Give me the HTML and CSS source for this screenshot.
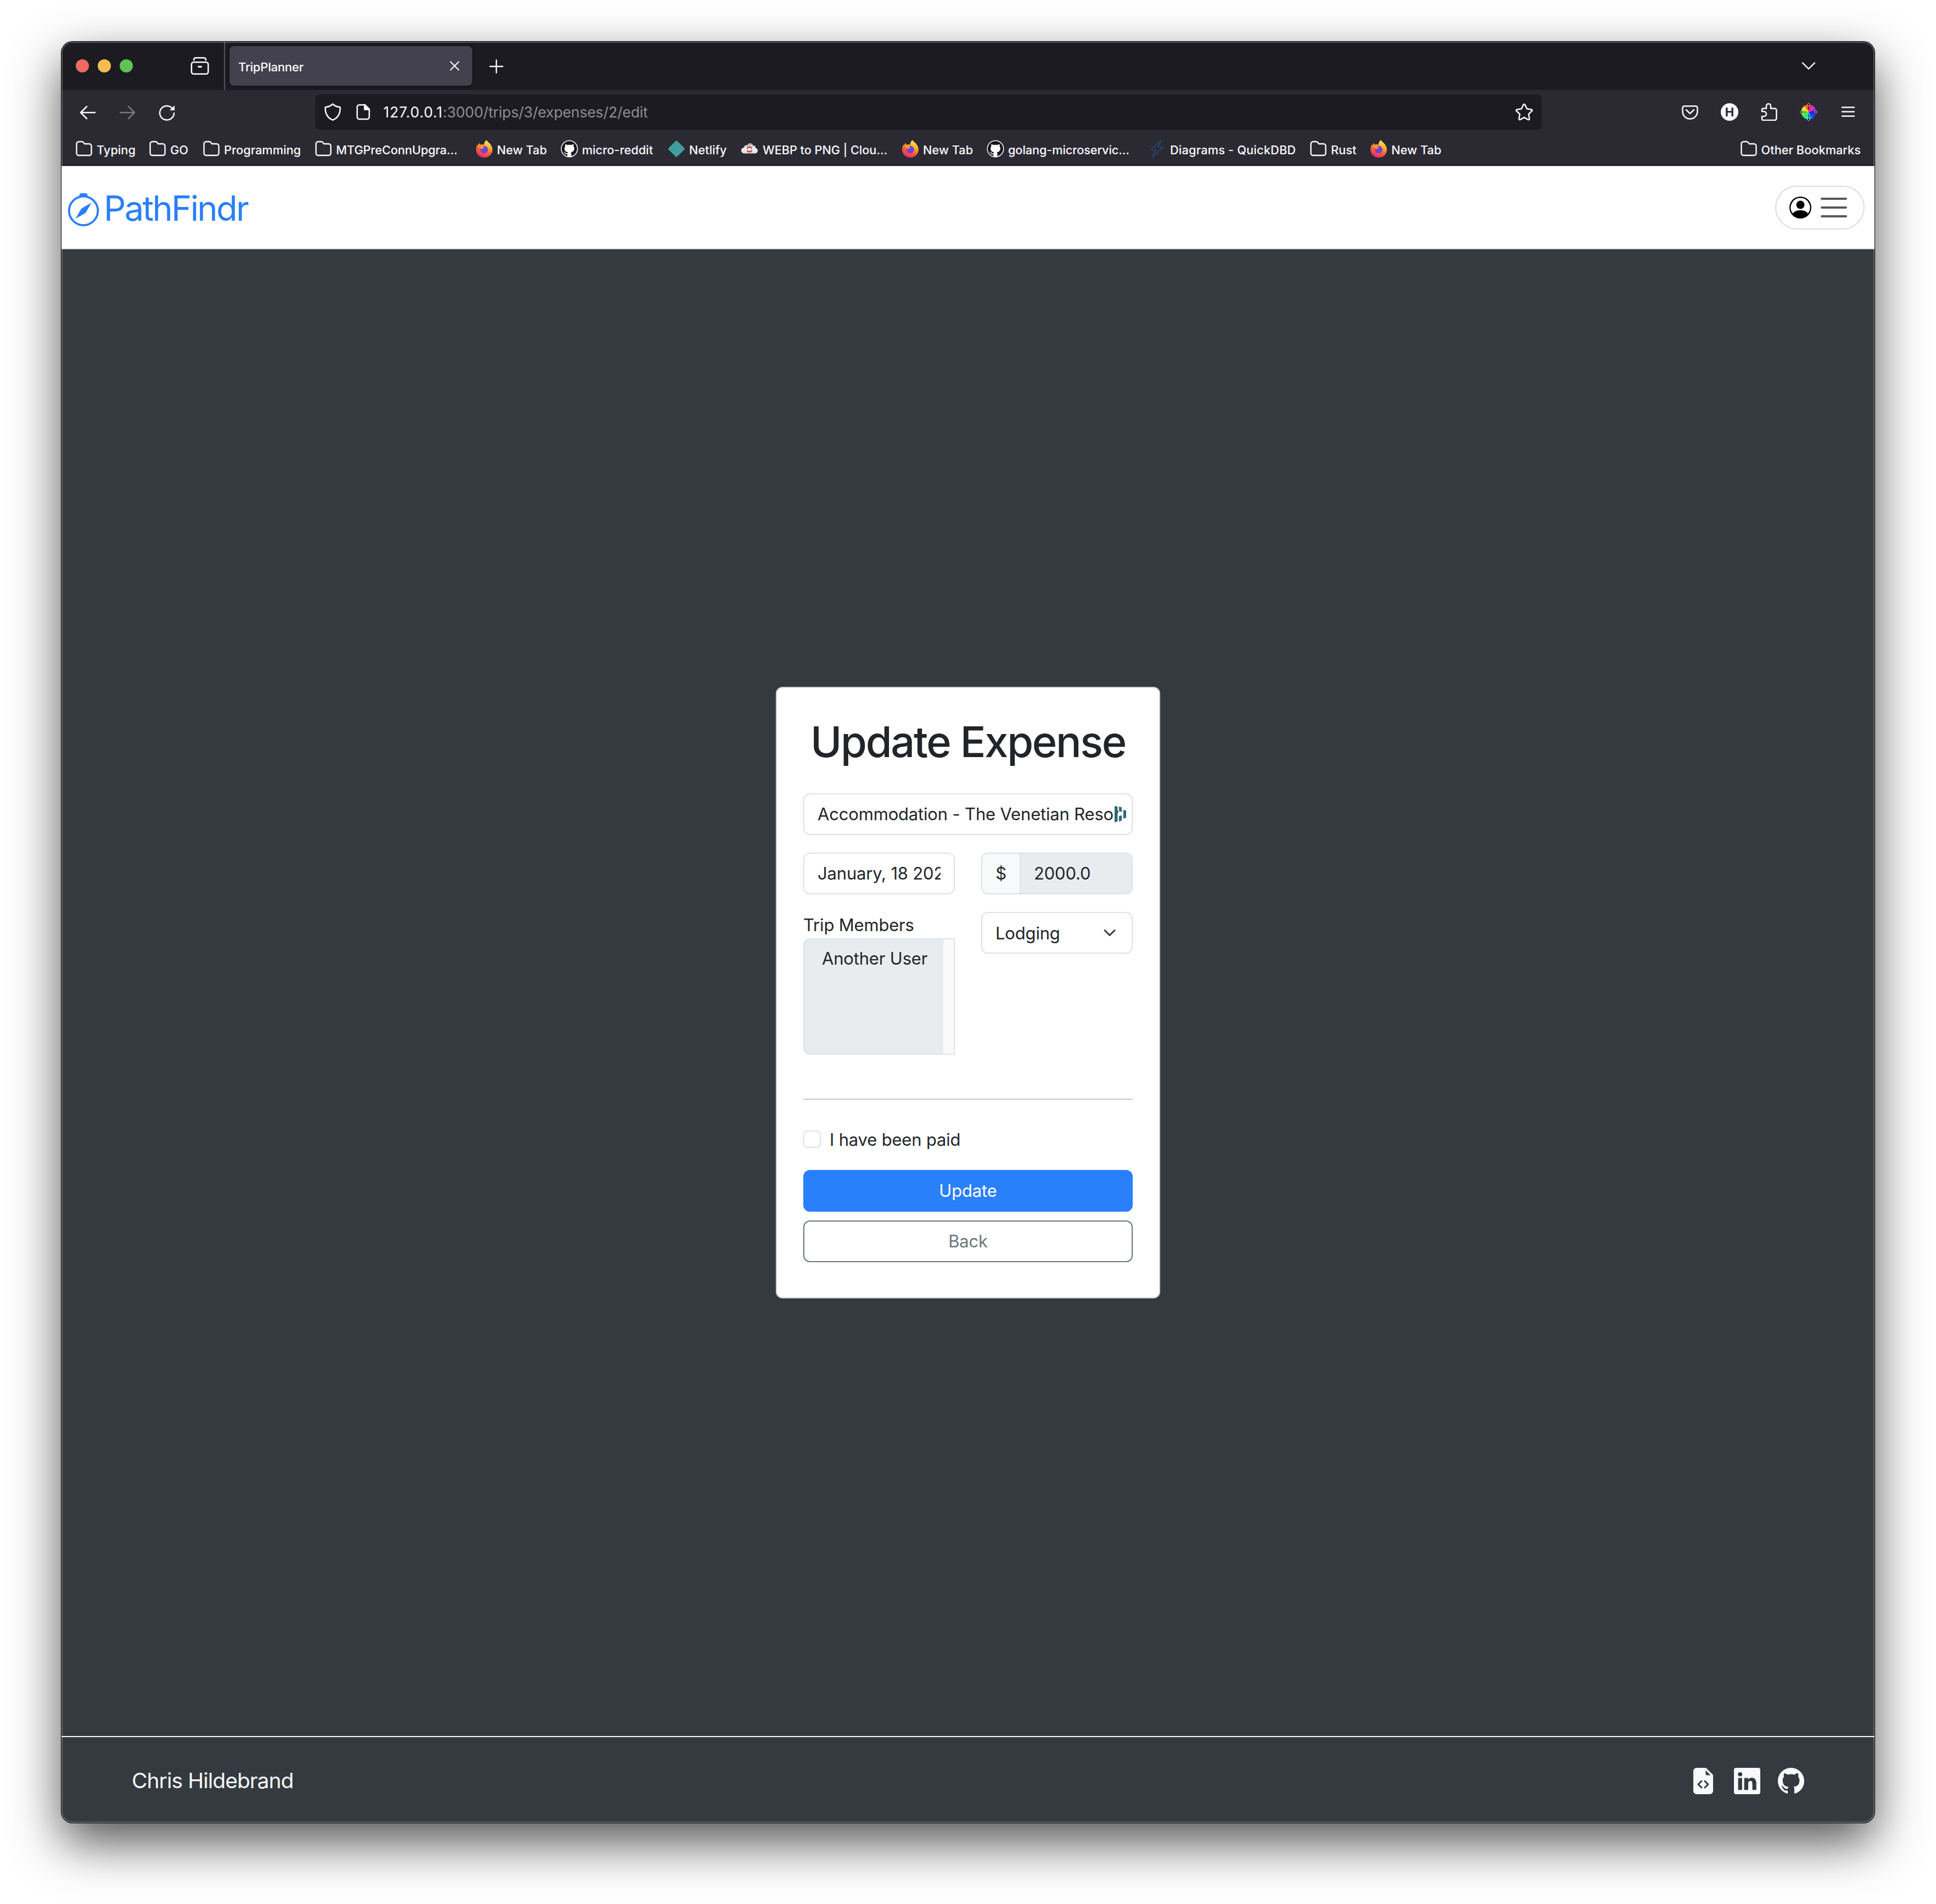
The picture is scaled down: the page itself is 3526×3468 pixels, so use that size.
FILE: index.html
```html
<!DOCTYPE html>
<html lang="en">
<head>
<meta charset="utf-8">
<title>TripPlanner</title>
<link rel="stylesheet" href="styles.css">
</head>
<body>
<svg class="defs" width="0" height="0" aria-hidden="true">
  <defs>
    <linearGradient id="flame" x1="0.75" y1="0" x2="0.3" y2="1">
      <stop offset="0" stop-color="#fff04f"/><stop offset="0.35" stop-color="#ffb02e"/><stop offset="0.65" stop-color="#ff5a36"/><stop offset="1" stop-color="#e3267a"/>
    </linearGradient>
    <linearGradient id="cloudfill" x1="0" y1="0" x2="0" y2="1"><stop offset="0" stop-color="#a5a3a3"/><stop offset="0.5" stop-color="#f2f0f0"/><stop offset="1" stop-color="#dedcdc"/></linearGradient>
    <symbol id="folder" viewBox="0 0 32 32"><path d="M2.5 7a4 4 0 0 1 4-4H12c1.400 0 2.200.6 3 1.600L17 7h8.500a4 4 0 0 1 4 4v13a4 4 0 0 1-4 4h-19a4 4 0 0 1-4-4z" fill="none" stroke="currentColor" stroke-width="2.400"/></symbol>
    <symbol id="firefox" viewBox="0 0 32 32">
      <path d="M20 0c2 4 6 5 8 9 1.500 2 2.800 5 2.800 8.500C30.800 26 24 32 16 32S1 26 1 17.500C1 13 2.500 9.500 3.500 8l.6 2.800C5 8.500 6 6.600 7.500 5.500c.2 1.800.6 2.500 1.800 3.200 2-.9 4-1 6 .1C16 5 17 2 20 0z" fill="url(#flame)"/>
      <circle cx="16" cy="17.500" r="6.800" fill="#6b45d8"/>
      <path d="M8 12c3-1 6.500 0 8.500 2-1.500 1.200-4 .8-4.500 3.200C11 16 9 15 8 12z" fill="#ff9a2e"/>
    </symbol>
    <symbol id="octocat" viewBox="0 0 16 16"><path d="M8 0C3.580 0 0 3.580 0 8c0 3.540 2.290 6.530 5.470 7.590.4.070.55-.17.55-.38 0-.19-.01-.82-.01-1.490-2.010.37-2.530-.49-2.690-.94-.09-.23-.48-.94-.82-1.130-.28-.15-.68-.52-.01-.53.63-.01 1.080.58 1.230.82.72 1.210 1.870.87 2.330.66.070-.52.28-.87.51-1.070-1.780-.2-3.640-.89-3.640-3.950 0-.87.31-1.590.82-2.150-.08-.2-.36-1.020.08-2.120 0 0 .67-.21 2.200.82.64-.18 1.320-.27 2-.27s1.360.09 2 .27c1.530-1.040 2.200-.82 2.200-.82.44 1.100.16 1.920.08 2.120.51.56.82 1.270.82 2.150 0 3.070-1.870 3.750-3.650 3.950.29.25.54.73.54 1.480 0 1.070-.01 1.930-.01 2.200 0 .21.15.46.55.38A8.010 8.010 0 0 0 16 8c0-4.420-3.580-8-8-8" fill="currentColor"/></symbol>
    <symbol id="github-fav" viewBox="0 0 32 32"><circle cx="16" cy="16" r="15.500" fill="#fff"/><use href="#octocat" x="2" y="2" width="28" height="28" color="#17151c"/></symbol>
  </defs>
</svg>

<div class="window">
  <div class="tabbar">
    <div class="lights"><i class="light red"></i><i class="light yellow"></i><i class="light green"></i></div>
    <svg class="icon archive" viewBox="0 0 40 40" fill="none" stroke="currentColor" stroke-width="2.600" stroke-linecap="round"><path d="M9 9.500c0-3 1.500-4.200 4-4.200h14c2.500 0 4 1.200 4 4.200"/><rect x="4.800" y="13.300" width="30.400" height="21.500" rx="4"/><path d="M17.500 21.500h5" stroke-width="3"/></svg>
    <div class="tab"><span class="tab-title">TripPlanner</span>
      <svg class="close" viewBox="0 0 18 18" stroke="currentColor" stroke-width="2" stroke-linecap="round"><path d="M1.500 1.500l15 15M16.500 1.500l-15 15"/></svg></div>
    <svg class="plus" viewBox="0 0 26 26" stroke="currentColor" stroke-width="2.400" stroke-linecap="round"><path d="M13 1.500v23M1.500 13h23"/></svg>
    <svg class="tabs-menu" viewBox="0 0 26 16" fill="none" stroke="currentColor" stroke-width="2.400" stroke-linecap="round" stroke-linejoin="round"><path d="M2 2.500l11 11 11-11"/></svg>
  </div>

  <div class="toolbar">
    <div class="cell"><svg class="icon" viewBox="0 0 32 32" fill="none" stroke="currentColor" stroke-width="2.500" stroke-linecap="round" stroke-linejoin="round"><path d="M29 17H3.500M14 6L3 17l11 11"/></svg></div>
    <div class="cell dim"><svg class="icon" viewBox="0 0 32 32" fill="none" stroke="currentColor" stroke-width="2.500" stroke-linecap="round" stroke-linejoin="round"><path d="M3 17h25.500M18 6l11 11-11 11"/></svg></div>
    <div class="cell"><svg class="icon" viewBox="0 0 32 32" fill="none" stroke="currentColor" stroke-width="2.500" stroke-linecap="round"><path d="M29 18a13 12.800 0 1 1-4-9.500l3 2.800"/><path d="M30 4v9h-9z" fill="currentColor" stroke="none"/></svg></div>
    <div class="urlbar">
      <svg class="icon shield" viewBox="0 0 32 32" fill="none" stroke="currentColor" stroke-width="2.500" stroke-linejoin="round"><path d="M16 1.500c4 3.600 8 5.200 13.500 5.800C30 18 26 26.500 16 30.700 6 26.500 2 18 2.500 7.300 8 6.700 12 5.100 16 1.500z"/></svg>
      <svg class="icon doc" viewBox="0 0 32 32" fill="none" stroke="currentColor" stroke-width="2.500" stroke-linejoin="round"><path d="M18.500 3H8.500a4 4 0 0 0-4 4v18a4 4 0 0 0 4 4h14a4 4 0 0 0 4-4V11z"/><path d="M18 3l8.500 8.500H18z" fill="currentColor"/></svg>
      <span class="url"><span class="host">127.0.0.1</span><span class="path">:3000/trips/3/expenses/2/edit</span></span>
      <svg class="icon star" viewBox="0 0 32 32" fill="none" stroke="currentColor" stroke-width="2.500" stroke-linejoin="round"><path d="M14.500 2.800q1.500-2.300 3 0l3.500 7.400 8 1.200q2.700.7 1 2.800l-6 5.800 1.500 8.300q.1 2.500-2.400 1.500L16 25.800l-7.100 4q-2.500 1-2.400-1.500L8 20l-6-5.800q-1.700-2.100 1-2.800l8-1.200z"/></svg>
    </div>
    <div class="cell first-action"><svg class="icon" viewBox="0 0 32 32" fill="none" stroke="currentColor" stroke-width="2.500" stroke-linecap="round" stroke-linejoin="round"><path d="M5.500 5.200h21a3 3 0 0 1 3 3V15a13.500 13.500 0 0 1-27 0V8.200a3 3 0 0 1 3-3z"/><path d="M9 12l7 6.800 7-6.800"/></svg></div>
    <div class="cell"><div class="badge-h">H</div></div>
    <div class="cell"><svg class="icon" viewBox="0 0 32 32" fill="none" stroke="currentColor" stroke-width="2.500" stroke-linejoin="round"><path d="M5.500 9.500H11V5a4 4 0 0 1 8 0v4.500h7a3.500 3.500 0 0 1 3.500 3.500v14.500a3.500 3.500 0 0 1-3.500 3.500H5.500a2.500 2.500 0 0 1-2.500-2.500V24h3.500a4.500 4.500 0 0 0 0-9H3v-3a2.500 2.500 0 0 1 2.500-2.500z"/></svg></div>
    <div class="cell"><div class="wheel"><svg class="icon" viewBox="0 0 32 32"><g stroke="#111" stroke-width="1.600" stroke-opacity="0.600"><path d="M16 4v8M16 20v8M4 16h8M20 16h8"/></g><g fill="#000" stroke="#ddd" stroke-width="1"><ellipse cx="16" cy="2.800" rx="1.900" ry="2.300"/><ellipse cx="16" cy="29.200" rx="1.900" ry="2.300"/><ellipse cx="2.800" cy="16" rx="2.300" ry="1.900"/><ellipse cx="29.200" cy="16" rx="2.300" ry="1.900"/></g></svg></div></div>
    <div class="cell"><svg class="icon" viewBox="0 0 32 32" stroke="currentColor" stroke-width="2.400" stroke-linecap="round"><path d="M5 7.500h22M5 15.500h22M5 23.500h22"/></svg></div>
  </div>

  <div class="bookmarks">
    <div class="bm w134"><svg class="icon"><use href="#folder"/></svg><span>Typing</span></div>
    <div class="bm w98"><svg class="icon"><use href="#folder"/></svg><span>GO</span></div>
    <div class="bm w204"><svg class="icon"><use href="#folder"/></svg><span>Programming</span></div>
    <div class="bm w293"><svg class="icon"><use href="#folder"/></svg><span class="tight">MTGPreConnUpgra…</span></div>
    <div class="bm w155"><svg class="icon"><use href="#firefox"/></svg><span>New Tab</span></div>
    <div class="bm w195"><svg class="icon"><use href="#github-fav"/></svg><span>micro-reddit</span></div>
    <div class="bm w133"><svg class="icon" viewBox="0 0 32 32"><path d="M14.800 1.500q1.200-1 2.400 0l13.300 13.300q1 1.200 0 2.400L17.200 30.500q-1.200 1-2.400 0L1.500 17.200q-1-1.200 0-2.400z" fill="#419e9c"/></svg><span>Netlify</span></div>
    <div class="bm w293"><svg class="icon" viewBox="0 0 32 32"><path d="M6 24.500c-7-1-6.500-10 0-10.500 0-4 4-5.500 6-4.500 2-5 9-5 10.500.5 4-.5 5 2 4.500 4.500 6 1.500 5 9.500-.5 10z" fill="url(#cloudfill)"/><path d="M11.800 16a4.600 4.600 0 0 1 8.400-.5M20.200 18.500a4.600 4.600 0 0 1-8.400.5" fill="none" stroke="#c8473d" stroke-width="2.500"/></svg><span class="webp">WEBP to PNG | Clou…</span></div>
    <div class="bm w155"><svg class="icon"><use href="#firefox"/></svg><span>New Tab</span></div>
    <div class="bm w294"><svg class="icon"><use href="#github-fav"/></svg><span class="tight">golang-microservic…</span></div>
    <div class="bm w294"><svg class="icon" viewBox="0 0 32 32" fill="none" stroke="#20558d" stroke-width="1.200" stroke-linejoin="round"><path d="M24 1L5 18h9L8 31l19-18h-9z"/></svg><span class="wide">Diagrams - QuickDBD</span></div>
    <div class="bm w110"><svg class="icon"><use href="#folder"/></svg><span>Rust</span></div>
    <div class="bm"><svg class="icon"><use href="#firefox"/></svg><span>New Tab</span></div>
    <div class="bm other"><svg class="icon"><use href="#folder"/></svg><span>Other Bookmarks</span></div>
  </div>

  <header class="site-header">
    <a class="brand"><svg class="compass" viewBox="0 0 16 16" fill="currentColor"><path d="M8 16.016a7.500 7.500 0 0 0 1.962-14.740A1 1 0 0 0 9 0H7a1 1 0 0 0-.962 1.276A7.500 7.500 0 0 0 8 16.016m6.500-7.500a6.500 6.500 0 1 1-13 0 6.500 6.500 0 0 1 13 0"/><path d="m6.940 7.440 4.950-2.830-2.830 4.950-4.949 2.830 2.828-4.950z"/></svg><span>PathFindr</span></a>
    <div class="user-menu">
      <svg class="person" viewBox="0 0 16 16" fill="#000"><path d="M11 6a3 3 0 1 1-6 0 3 3 0 0 1 6 0"/><path fill-rule="evenodd" d="M0 8a8 8 0 1 1 16 0A8 8 0 0 1 0 8m8-7a7 7 0 0 0-5.468 11.370C3.242 11.226 4.805 10 8 10s4.757 1.225 5.468 2.370A7 7 0 0 0 8 1"/></svg>
      <svg class="burger" viewBox="0 0 48 40" stroke="#565a5e" stroke-width="4" stroke-linecap="round"><path d="M2 4h44M2 20h44M2 36h44"/></svg>
    </div>
  </header>

  <main class="page">
    <form class="card">
      <h1>Update Expense</h1>
      <div class="field"><span class="clip">Accommodation - The Venetian Resort</span>
        <svg class="dash" viewBox="0 0 22 30" fill="#2b6676"><path d="M0 0l5.500 1.500V28L0 30zM8 1l5 1.500V11L8 9.500zM8 18.500l5-1.500v9.500L8 28.500zM16 7l5 1.500v13L16 23z"/></svg></div>
      <div class="grid">
        <div class="field"><span class="clip">January, 18 2024</span></div>
        <div class="group"><span class="addon">$</span><span class="amount">2000.0</span></div>
        <div class="members"><label>Trip Members</label>
          <div class="listbox"><div class="option">Another User</div><div class="track"></div></div></div>
        <div class="field select"><span>Lodging</span><svg viewBox="0 0 16 16" fill="none" stroke="#343a40" stroke-width="2" stroke-linecap="round" stroke-linejoin="round"><path d="m2 5 6 6 6-6"/></svg></div>
      </div>
      <hr>
      <label class="check"><span class="box"></span><span>I have been paid</span></label>
      <div class="btn primary">Update</div>
      <div class="btn outline">Back</div>
    </form>
  </main>

  <footer class="site-footer">
    <span class="author">Chris Hildebrand</span>
    <div class="links">
      <svg viewBox="0 0 16 16" fill="currentColor"><path fill-rule="evenodd" d="M9.293 0H4a2 2 0 0 0-2 2v12a2 2 0 0 0 2 2h8a2 2 0 0 0 2-2V4.707A1 1 0 0 0 13.707 4L10 .293A1 1 0 0 0 9.293 0M9.500 3.500v-2l3 3h-2a1 1 0 0 1-1-1M6.646 7.646a.5.5 0 1 1 .708.708L5.707 10l1.647 1.646a.5.5 0 0 1-.708.708l-2-2a.5.5 0 0 1 0-.708zm2.708 0 2 2a.5.5 0 0 1 0 .708l-2 2a.5.5 0 0 1-.708-.708L10.293 10 8.646 8.354a.5.5 0 1 1 .708-.708"/></svg>
      <svg viewBox="0 0 16 16" fill="currentColor"><path d="M0 1.146C0 .513.526 0 1.175 0h13.650C15.474 0 16 .513 16 1.146v13.708c0 .633-.526 1.146-1.175 1.146H1.175C.526 16 0 15.487 0 14.854zm4.943 12.248V6.169H2.542v7.225zm-1.200-8.212c.837 0 1.358-.554 1.358-1.248-.015-.709-.52-1.248-1.342-1.248S2.400 3.226 2.400 3.934c0 .694.521 1.248 1.327 1.248zm4.908 8.212V9.359c0-.216.016-.432.080-.586.173-.431.568-.878 1.232-.878.869 0 1.216.662 1.216 1.634v3.865h2.401V9.250c0-2.220-1.184-3.252-2.764-3.252-1.274 0-1.845.7-2.165 1.193v.025h-.016l.016-.025V6.169h-2.400c.030.678 0 7.225 0 7.225z"/></svg>
      <svg><use href="#octocat"/></svg>
    </div>
  </footer>
</div>
</body>
</html>
```
FILE: styles.css
```css
* { box-sizing: border-box; }

body {
  margin: 0;
  width: 3526px;
  height: 3468px;
  padding: 76px 112px 148px;
  overflow: hidden;
  background: #fff;
  color: #212529;
  font-family: Inter, "Liberation Sans", sans-serif;
  font-size: 31px;
  font-weight: 440;
  letter-spacing: -0.180px;
}

svg { display: block; flex: none; }
.defs { position: absolute; }

.window {
  position: relative;
  display: flex;
  flex-direction: column;
  width: 3302px;
  height: 3244px;
  border-radius: 20px;
  overflow: hidden;
  background: #343a40;
  box-shadow: 0 0 0 1px #000, 0 36px 90px rgba(0, 0, 0, 0.68);
}
.window::after {
  content: "";
  position: absolute;
  inset: 0;
  border-radius: 20px;
  box-shadow: inset 0 0 0 2px rgba(255, 255, 255, 0.25);
  pointer-events: none;
}

/* browser chrome */
.icon { width: 32px; height: 32px; }

.tabbar {
  display: flex;
  align-items: center;
  flex: none;
  height: 88px;
  background: #1c1b22;
  color: #fbfbfe;
}
.lights { display: flex; gap: 16px; margin-left: 26px; }
.light { width: 24px; height: 24px; border-radius: 50%; }
.red { background: #ed6b5f; }
.yellow { background: #f5bd4f; }
.green { background: #61c354; }
.archive { width: 40px; height: 40px; margin-left: 102px; }
.tab {
  display: flex;
  align-items: center;
  justify-content: space-between;
  position: relative;
  width: 442px;
  height: 72px;
  margin-left: 34px;
  padding: 0 23px 0 16px;
  border-radius: 8px;
  background: #42414d;
  box-shadow: 0 0 6px rgba(0, 0, 0, 0.5);
}
.tab::before {
  content: "";
  position: absolute;
  left: -10px;
  top: -8px;
  width: 2px;
  height: 88px;
  background: #55545e;
}
.tab-title { padding-top: 3px; font-size: 22px; font-weight: 500; letter-spacing: -0.200px; }
.close { width: 18px; height: 18px; }
.plus { width: 26px; height: 26px; margin: 2px 0 0 31px; }
.tabs-menu { width: 26px; height: 16px; margin-left: auto; margin-right: 107px; }

.toolbar {
  display: flex;
  align-items: center;
  flex: none;
  height: 80px;
  padding: 0 12px;
  background: #2b2a33;
  color: #fbfbfe;
}
.cell { display: flex; justify-content: center; width: 72px; }
.dim { color: #797881; }
.urlbar {
  display: flex;
  align-items: center;
  width: 2234px;
  height: 64px;
  margin-left: 234px;
  padding: 0 16px;
  border-radius: 8px;
  background: #1c1b22;
}
.doc { margin-left: 24px; }
.url { margin-left: 20px; font-size: 26.5px; }
.host { letter-spacing: 0.850px; }
.path { color: #8f8f94; letter-spacing: -0.120px; }
.star { margin-left: auto; }
.first-action { margin-left: auto; }
.badge-h {
  width: 32px;
  height: 32px;
  border-radius: 50%;
  background: #fbfbfe;
  color: #2b2a33;
  font-size: 22px;
  font-weight: 700;
  line-height: 32px;
  text-align: center;
  letter-spacing: 0;
}
.wheel {
  width: 32px;
  height: 32px;
  background: radial-gradient(circle, transparent 13px, #2b2a33 14px), conic-gradient(#f02020, #f030e0 45deg, #3020f0 100deg, #1060ff 150deg, #30e0f0 180deg, #40e060 225deg, #70f020 265deg, #f8f020 305deg, #f02020 360deg);
}

.bookmarks {
  display: flex;
  align-items: center;
  flex: none;
  height: 58px;
  padding: 0 25px 2px;
  border-bottom: 2px solid #0c0c14;
  background: #2b2a33;
  color: #fbfbfe;
  font-size: 21.700px;
  font-weight: 500;
  white-space: nowrap;
}
.bm { display: flex; align-items: center; gap: 7px; flex: none; letter-spacing: 0.05px; }
.bm span { padding-top: 3px; }
.bm .tight { letter-spacing: -0.080px; }
.bm .webp { padding-left: 1px; letter-spacing: -0.030px; }
.bm .wide { padding-left: 1px; letter-spacing: 0.2px; }
.w98 { width: 98px; }
.w110 { width: 110px; }
.w133 { width: 133px; }
.w134 { width: 134px; }
.w155 { width: 155px; }
.w195 { width: 195px; }
.w204 { width: 204px; }
.w293 { width: 293px; }
.w294 { width: 294px; }
.other { margin-left: auto; }

/* site header */
.site-header {
  display: flex;
  align-items: center;
  justify-content: space-between;
  flex: none;
  height: 152px;
  padding: 0 18px 0 10px;
  background: #fff;
  border-top: 2px solid #dee2e6;
  border-bottom: 2px solid #dee2e6;
}
.brand { display: flex; align-items: center; gap: 7px; color: #2a7ffb; font-size: 63px; letter-spacing: -2.600px; }
.brand span { padding-top: 2px; }
.compass { width: 60px; height: 60px; margin-top: 8px; }
.user-menu {
  display: flex;
  align-items: center;
  gap: 17px;
  width: 163px;
  height: 80px;
  padding-left: 24px;
  border: 2px solid #dcdcdc;
  border-radius: 40px;
}
.person { width: 40px; height: 40px; }
.burger { width: 48px; height: 40px; }

/* expense form */
.page { display: flex; flex: 1; align-items: center; justify-content: center; }
.card {
  width: 700px;
  height: 1114px;
  padding: 50px 48px 0;
  border: 2px solid #cdcfd2;
  border-radius: 12px;
  background: #fff;
}
h1 {
  margin: 0 0 46px;
  font-size: 77.600px;
  font-weight: 550;
  line-height: 96px;
  letter-spacing: -2.350px;
  text-align: center;
  white-space: nowrap;
}
.field {
  position: relative;
  display: flex;
  align-items: center;
  height: 76px;
  padding: 0 24px;
  border: 2px solid #dee2e6;
  border-radius: 12px;
  background: #fff;
}
.clip { flex: 1; overflow: hidden; white-space: nowrap; line-height: 48px; }
.dash { position: absolute; right: 9px; top: 21px; width: 22px; height: 30px; }
.grid {
  display: grid;
  grid-template-columns: 276px 276px;
  gap: 32px 48px;
  align-items: start;
  margin-top: 32px;
}
.group {
  display: flex;
  height: 76px;
  border: 2px solid #dee2e6;
  border-radius: 12px;
  overflow: hidden;
  line-height: 72px;
}
.addon { width: 70px; background: #f8f9fa; border-right: 2px solid #dee2e6; text-align: center; }
.amount { flex: 1; padding-left: 24px; background: #e9ecef; }
.members label { display: block; line-height: 48px; }
.listbox {
  display: flex;
  height: 212px;
  border: 2px solid #dee2e6;
  border-radius: 12px 0 0 12px;
  background: #e9ecef;
}
.option { flex: 1; padding: 11px 0 0 32px; line-height: 48px; white-space: nowrap; }
.track { width: 20px; background: #fafafa; border-left: 1px solid #ededed; }
.select { justify-content: space-between; padding-right: 28px; }
.select svg { width: 24px; height: 24px; }
hr { height: 2px; margin: 80px 0 56px; border: 0; background: #c8c9ca; }
.check { display: flex; align-items: center; gap: 16px; height: 32px; margin-bottom: 40px; }
.box { width: 32px; height: 32px; border: 2px solid #dee2e6; border-radius: 8px; }
.btn { height: 76px; border: 2px solid; border-radius: 12px; line-height: 72px; text-align: center; }
.primary { margin-bottom: 16px; border-color: #2a7ffb; background: #2a7ffb; color: #fff; }
.outline { border-color: #6c757d; color: #6c757d; }

/* site footer */
.site-footer {
  display: flex;
  align-items: center;
  justify-content: space-between;
  flex: none;
  height: 158px;
  padding: 0 128px;
  border-top: 2px solid #f8f9fa;
  color: #f8f9fa;
}
.author { font-size: 38.800px; letter-spacing: -0.850px; }
.links { display: flex; gap: 32px; padding-top: 4px; }
.links svg { width: 48px; height: 48px; }
```
